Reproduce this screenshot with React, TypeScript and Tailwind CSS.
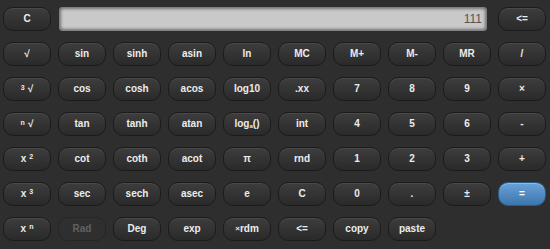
import React from 'react';

type Key = { label: React.ReactNode; kind?: 'dim' | 'blue' };

const sup = (s: string) => <span className="relative -top-[3px] text-[7px] ml-[3px]">{s}</span>;
const pre = (s: string) => <span className="relative -top-[2px] text-[7px] mr-[3px]">{s}</span>;

const rows: Key[][] = [
  [
    { label: '√' }, { label: 'sin' }, { label: 'sinh' }, { label: 'asin' }, { label: 'ln' },
    { label: 'MC' }, { label: 'M+' }, { label: 'M-' }, { label: 'MR' }, { label: '/' },
  ],
  [
    { label: <>{pre('3')}√</> },
    { label: 'cos' }, { label: 'cosh' }, { label: 'acos' }, { label: 'log10' },
    { label: '.xx' }, { label: '7' }, { label: '8' }, { label: '9' }, { label: '×' },
  ],
  [
    { label: <>{pre('n')}√</> },
    { label: 'tan' }, { label: 'tanh' }, { label: 'atan' },
    { label: <>log<span className="relative top-[2px] text-[6px]">a</span>()</> },
    { label: 'int' }, { label: '4' }, { label: '5' }, { label: '6' }, { label: '-' },
  ],
  [
    { label: <>x{sup('2')}</> }, { label: 'cot' }, { label: 'coth' }, { label: 'acot' }, { label: 'π' },
    { label: 'rnd' }, { label: '1' }, { label: '2' }, { label: '3' }, { label: '+' },
  ],
  [
    { label: <>x{sup('3')}</> }, { label: 'sec' }, { label: 'sech' }, { label: 'asec' }, { label: 'e' },
    { label: 'C' }, { label: '0' }, { label: '.' }, { label: '±' }, { label: '=', kind: 'blue' },
  ],
  [
    { label: <>x{sup('n')}</> }, { label: 'Rad', kind: 'dim' }, { label: 'Deg' }, { label: 'exp' },
    { label: <><span className="text-[8px]">×</span>rdm</> }, { label: '<=' }, { label: 'copy' }, { label: 'paste' },
  ],
];

function Btn({ k }: { k: Key }) {
  const base = 'h-[24px] rounded-[10px] flex items-center justify-center text-[10px] font-bold leading-none select-none';
  if (k.kind === 'blue') {
    return (
      <div className={`${base} text-white border border-[#2c5a86] bg-gradient-to-b from-[#6aa3d8] to-[#3c74ad] shadow-[inset_0_1px_0_rgba(255,255,255,0.25)]`}>
        {k.label}
      </div>
    );
  }
  if (k.kind === 'dim') {
    return (
      <div className={`${base} text-[#626262] border border-[#262626] bg-[#2f2f2f]`}>
        {k.label}
      </div>
    );
  }
  return (
    <div className={`${base} text-[#ececec] border border-[#1b1b1b] bg-gradient-to-b from-[#3d3d3d] to-[#2a2a2a] shadow-[inset_0_1px_0_rgba(255,255,255,0.07)]`}>
      {k.label}
    </div>
  );
}

export default function App() {
  return (
    <div
      className="w-[550px] h-[249px] bg-[#2e2e2e] pl-[3px] pt-[7px] overflow-hidden"
      style={{ fontFamily: '"Liberation Sans", Arial, sans-serif' }}
    >
      <div className="grid grid-cols-[repeat(10,48px)] gap-x-[7px] gap-y-[11px]">
        <Btn k={{ label: 'C' }} />
        <div className="col-span-8 ml-[1px] mr-[4px] h-[24px] rounded-[4px] bg-[#c9c9c9] shadow-[inset_0_0_3px_2px_rgba(60,60,60,0.6)] flex items-center justify-end pr-[5px] text-[12px] text-[#555555]">
          111
        </div>
        <Btn k={{ label: '<=' }} />
        {rows.flat().map((k, i) => (
          <Btn key={i} k={k} />
        ))}
      </div>
    </div>
  );
}
